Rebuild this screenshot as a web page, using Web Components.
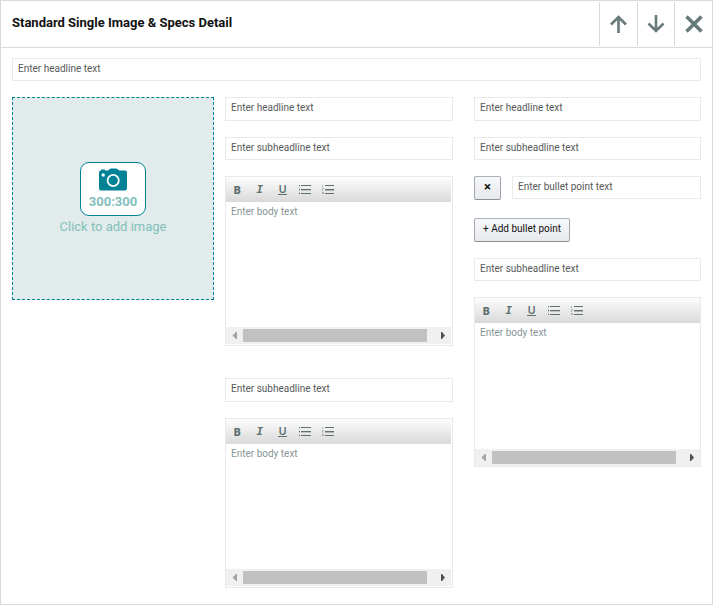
<!DOCTYPE html>
<html lang="en">
<head>
<meta charset="utf-8">
<title>Standard Single Image &amp; Specs Detail</title>
<style>
  html, body { margin: 0; background: #fff; }
  body { font-family: Roboto, "Noto Sans", "Liberation Sans", sans-serif; font-size: 10px; color: #111; }
</style>
</head>
<body>
<module-card></module-card>

<script>
  const define = (name, html, init) => {
    const template = document.createElement('template');
    template.innerHTML = html;
    customElements.define(name, class extends HTMLElement {
      constructor() {
        super();
        this.attachShadow({ mode: 'open' }).append(template.content.cloneNode(true));
      }
      connectedCallback() { if (init) init(this, this.shadowRoot); }
    });
  };

  define('text-field', `
    <style>
      :host { display: block; height: 23px; }
      :host([tall]) { height: 24px; }
      input { box-sizing: border-box; display: block; width: 100%; height: 100%; margin: 0;
        border: 1px solid #e7eaea; border-radius: 0; padding: 0 5px 2px; background: #fff;
        font: inherit; color: #555; outline: none; }
      :host([tall]) input { padding-bottom: 3px; }
      input::placeholder { color: #565959; opacity: 1; }
    </style>
    <input type="text">
  `, (host, root) => {
    const input = root.querySelector('input');
    input.placeholder = host.getAttribute('label');
    input.setAttribute('aria-label', host.getAttribute('label'));
  });

  define('scroll-strip', `
    <style>
      :host { display: flex; height: 17px; background: #f0f0f0; align-items: center; }
      button { all: unset; width: 17px; height: 17px; display: grid; place-items: center; color: #505050; }
      button[disabled] { color: #a3a3a3; }
      svg { display: block; }
      .track { flex: 1; height: 13px; }
      .thumb { width: 96.5%; height: 13px; background: #c1c1c1; }
    </style>
    <button type="button" disabled aria-label="Scroll left"><svg width="5" height="8"><path d="M4 0h1v7H4L0.500 3.500z" fill="currentColor"/></svg></button>
    <div class="track"><div class="thumb"></div></div>
    <button type="button" aria-label="Scroll right"><svg width="5" height="8"><path d="M1 0v7h1l3-3.500L2 0z" fill="currentColor"/></svg></button>
  `);

  define('rich-editor', `
    <style>
      :host { box-sizing: border-box; display: flex; flex-direction: column; height: 170px;
        border: 1px solid #e7eaea; padding: 0 1px 1px 0; }
      :host([flush]) { padding: 0; }
      .bar { height: 25px; background: linear-gradient(#fdfdfd, #d9d9d9); }
      .tools { display: grid; grid-template-columns: repeat(5, 1fr); width: 113px; height: 25px; }
      button { all: unset; display: grid; place-items: center; color: #5f7070; }
      .b { font: 800 11px/14px "Noto Sans", sans-serif; }
      .i { font: italic 700 11px/14px "DejaVu Sans Mono", monospace; }
      .u { font: 600 11px/10px "Noto Sans", sans-serif; }
      .u span { border-bottom: 1px solid #5f7070; }
      textarea { flex: 1; min-height: 0; box-sizing: border-box; width: 100%; margin: 0; border: 0; padding: 3px 5px;
        resize: none; overflow: hidden; outline: none; background: #fff; font: inherit; line-height: 14px; color: #555; }
      textarea::placeholder { color: #879596; opacity: 1; }
      svg { display: block; }
    </style>
    <div class="bar"><div class="tools" role="toolbar" aria-label="Formatting">
      <button type="button" class="b" aria-label="Bold">B</button>
      <button type="button" class="i" aria-label="Italic">I</button>
      <button type="button" class="u" aria-label="Underline"><span>U</span></button>
      <button type="button" aria-label="Bulleted list"><svg width="12" height="9" fill="#5f7070"><path d="M0 0h1v1H0zM0 4h1v1H0zM0 8h1v1H0zM2 0h10v1H2zM2 4h10v1H2zM2 8h10v1H2z"/><path d="M0 1h1v1H0zM0 3h1v1H0zM0 5h1v1H0zM0 7h1v1H0zM2 5h10v1H2z" opacity=".3"/></svg></button>
      <button type="button" aria-label="Numbered list"><svg width="12" height="9" fill="#5f7070"><path d="M3 0h9v1H3zM3 4h9v1H3zM3 8h9v1H3z"/><path d="M0 0h1v2H0zM0 3h2v1H1v2H0zM0 7h2v2H0zM3 5h9v1H3z" opacity=".45"/></svg></button>
    </div></div>
    <textarea aria-label="Body text" placeholder="Enter body text"></textarea>
    <scroll-strip></scroll-strip>
  `);

  define('push-button', `
    <style>
      :host { display: block; width: fit-content; height: 24px; }
      button { box-sizing: border-box; display: block; height: 24px; margin: 0; padding: 0 8px 3px; min-width: 27px;
        border: 1px solid; border-color: #adb1b8 #a2a6ac #8d9096; border-radius: 2px;
        background: linear-gradient(#f7f8fa, #e7e9ec); font: inherit; color: #111; white-space: nowrap; }
    </style>
    <button type="button"><slot></slot></button>
  `, (host, root) => {
    const name = host.getAttribute('label');
    if (name) root.querySelector('button').setAttribute('aria-label', name);
  });

  define('image-drop', `
    <style>
      :host { display: block; height: 203px; }
      button { all: unset; box-sizing: border-box; width: 100%; height: 100%; display: flex; flex-direction: column;
        align-items: center; justify-content: center; gap: 2px; border: 1px dashed #008296; background: #e2ebeb;
        font-size: 13px; line-height: 18px; color: #82c0bb; cursor: pointer; padding-top: 1px; }
      .badge { box-sizing: border-box; width: 66px; height: 54px; border: 1px solid #008296; border-radius: 9px;
        background: #fff; display: flex; flex-direction: column; align-items: center; padding-top: 5px; gap: 2px;
        font-weight: 700; }
      svg { display: block; }
    </style>
    <button type="button">
      <span class="badge">
        <svg width="28" height="23" viewBox="0 0 28 23">
          <path d="M2 22.500Q0 22.500 0 20.500V4Q0 2.500 2 2.500V1.500H6V2.500H9Q11 0.500 12 0.500H17Q18.500 0.500 20 2.500H26Q28 2.500 28 4.500V20.500Q28 22.500 26 22.500z" fill="#008296"/>
          <circle cx="14.200" cy="12.500" r="5.600" fill="none" stroke="#fff" stroke-width="1.800"/>
          <circle cx="4.200" cy="7" r="1.700" fill="#fff"/>
        </svg>
        <span>300:300</span>
      </span>
      <span>Click to add image</span>
    </button>
  `);

  define('card-header', `
    <style>
      :host { display: flex; height: 46px; border-bottom: 1px solid #d5dbdb; align-items: center; }
      h1 { flex: 1; margin: 0; padding: 0 11px 2px; font-size: 13px; line-height: 18px; font-weight: 700; }
      nav { display: flex; height: 44px; }
      button { all: unset; box-sizing: border-box; width: 38px; height: 44px; border-left: 1px solid #d5dbdb;
        display: grid; place-items: center; cursor: pointer; }
      .mid { width: 37px; }
      svg { display: block; fill: none; stroke: #687a7a; }
    </style>
    <h1><slot></slot></h1>
    <nav aria-label="Module actions">
      <button type="button" aria-label="Move up"><svg width="18" height="18" stroke-width="2.600"><path d="M8.500 18V2M1 9.500L8.500 2L16 9.500"/></svg></button>
      <button type="button" class="mid" aria-label="Move down"><svg width="18" height="18" stroke-width="2.600"><path d="M9 0V16M1.500 8.500L9 16L16.500 8.500"/></svg></button>
      <button type="button" aria-label="Remove"><svg width="18" height="18" stroke-width="3.600"><path d="M1.500 1.500L16.500 16.500M16.500 1.500L1.500 16.500"/></svg></button>
    </nav>
  `);

  define('module-card', `
    <style>
      :host { box-sizing: border-box; display: block; min-height: 100vh; border: 1px solid #d5dbdb; background: #fff; }
      main { padding: 10px 11px 16px; display: grid; gap: 16px; }
      .cols { display: grid; grid-template-columns: 202px 228fr 237fr; column-gap: 11px; align-items: start; }
      .stack { display: flex; flex-direction: column; gap: 16px; min-width: 0; }
      .specs { padding-left: 10px; }
      .group { display: flex; flex-direction: column; gap: 18px; }
      .second { margin-top: 16px; }
      .bullet { display: flex; gap: 11px; }
      .bullet text-field { flex: 1; }
      .x { font-size: 13px; font-weight: 700; }
    </style>
    <card-header>Standard Single Image &amp; Specs Detail</card-header>
    <main>
      <text-field label="Enter headline text"></text-field>
      <div class="cols">
        <image-drop></image-drop>
        <section class="stack">
          <text-field tall label="Enter headline text"></text-field>
          <text-field label="Enter subheadline text"></text-field>
          <rich-editor></rich-editor>
          <text-field tall class="second" label="Enter subheadline text"></text-field>
          <rich-editor></rich-editor>
        </section>
        <section class="stack specs">
          <text-field tall label="Enter headline text"></text-field>
          <text-field label="Enter subheadline text"></text-field>
          <div class="group">
            <div class="bullet">
              <push-button class="x" label="Remove bullet point">×</push-button>
              <text-field label="Enter bullet point text"></text-field>
            </div>
            <push-button>+ Add bullet point</push-button>
          </div>
          <text-field label="Enter subheadline text"></text-field>
          <rich-editor flush></rich-editor>
        </section>
      </div>
    </main>
  `);
</script>
</body>
</html>
